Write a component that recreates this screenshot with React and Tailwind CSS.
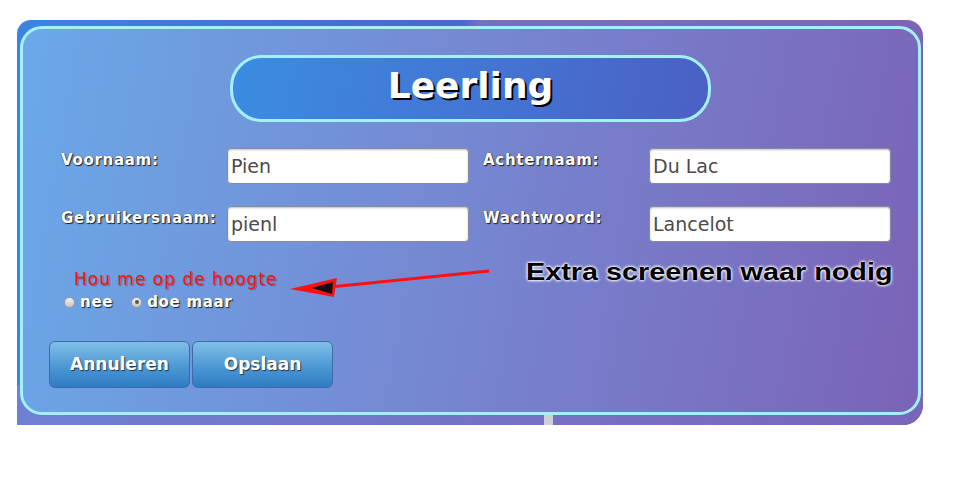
import React from "react";

const labelCls =
  "text-white font-bold text-[15px] leading-[18px] tracking-[0.7px] pt-[3px] [font-family:'DejaVu_Sans',sans-serif] [text-shadow:1px_1px_1px_#222,0_0_1px_#333]";
const inputCls =
  "h-[36px] w-[242px] bg-white rounded-[4px] border border-[#8a8a9a] shadow-[inset_0_1px_2px_rgba(0,0,0,0.25)] pl-[3px] flex items-center text-[19px] text-[#4b4b4b] [font-family:'DejaVu_Sans',sans-serif]";

function Field({ label, value }) {
  return (
    <div className="flex items-start">
      <div className={labelCls + " w-[166px]"}>{label}</div>
      <div className={inputCls}>{value}</div>
    </div>
  );
}

function Radio({ checked }) {
  return (
    <span className="inline-flex w-[11px] h-[11px] rounded-full border border-[#9a9a9a] bg-[linear-gradient(#f2f2f2,#c4c4c4)] items-center justify-center">
      {checked && <span className="w-[4px] h-[4px] rounded-full bg-[#555]" />}
    </span>
  );
}

function Btn({ children }) {
  return (
    <div className="w-[141px] h-[47px] rounded-[6px] border border-[#3f6aa6] bg-[linear-gradient(#80bfe7,#4c98d4_55%,#2e7bc2)] flex items-center justify-center text-white font-bold text-[17px] [font-family:'DejaVu_Sans',sans-serif] [text-shadow:1px_1px_1px_#234]">
      {children}
    </div>
  );
}

export default function App() {
  return (
    <div className="relative w-[960px] h-[500px] bg-white overflow-hidden pt-[20px] pl-[17px]">
      {/* background page behind dialog */}
      <div className="relative w-[906px] h-[405px] rounded-tl-[14px] rounded-tr-[16px] rounded-br-[20px] bg-[linear-gradient(90deg,#3c84e0_0%,#4868c9_49%,#7470c2_51%,#7c63b6_100%)]">
        <div className="absolute left-0 right-0 bottom-0 h-[40px] rounded-br-[20px] bg-[linear-gradient(90deg,#6e80d2,#7a66b9)]" />
        <div className="relative pt-[6px] pl-[3px]">
          {/* dialog */}
          <div className="w-[901px] h-[389px] rounded-[22px] border-[3px] border-[#a3f1f7] bg-[linear-gradient(100deg,#6aa9e8_0%,#7686d1_50%,#7b63b6_100%)] flex flex-col">
            <div className="mt-[26px] ml-[207px] w-[481px] h-[67px] rounded-[32px] border-[3px] border-[#a3f1f7] bg-[linear-gradient(100deg,#3b8ce3,#4b60c4)] flex items-center justify-center pb-[6px]">
              <span className="text-white font-bold text-[36px] leading-none [font-family:'DejaVu_Sans',sans-serif] [text-shadow:2px_2px_0_#000]">
                Leerling
              </span>
            </div>

            <div className="mt-[26px] pl-[38px] grid grid-cols-[408px_408px] gap-x-[14px] gap-y-[22px]">
              <Field label="Voornaam:" value="Pien" />
              <Field label="Achternaam:" value="Du Lac" />
              <Field label="Gebruikersnaam:" value="pienl" />
              <Field label="Wachtwoord:" value="Lancelot" />
            </div>

            <div className="mt-[27px] pl-[51px] text-[#ff1010] text-[17px] leading-[20px] tracking-[1px] [font-family:'DejaVu_Sans',sans-serif] [text-shadow:1px_1px_1px_rgba(80,0,0,0.4)]">
              Hou me op de hoogte
            </div>
            <div className="mt-[4px] pl-[41px] flex items-center gap-[2px] text-white font-bold text-[15px] leading-[18px] tracking-[0.7px] [font-family:'DejaVu_Sans',sans-serif] [text-shadow:1px_1px_1px_#222]">
              <Radio />
              <span className="ml-[3px]">nee</span>
              <span className="ml-[14px]" />
              <Radio checked />
              <span className="ml-[3px]">doe maar</span>
            </div>

            <div className="mt-[30px] pl-[26px] flex gap-[2px]">
              <Btn>Annuleren</Btn>
              <Btn>Opslaan</Btn>
            </div>
          </div>
        </div>
        <div className="absolute left-[527px] top-[395px] w-[9px] h-[10px] bg-[#cfcfd6]" />
      </div>

      {/* annotation */}
      <svg className="absolute left-0 top-0" width="960" height="500">
        <line x1="489" y1="271" x2="330" y2="287" stroke="#ff1010" strokeWidth="3" />
        <polygon points="290,289 337,278 334,297" fill="#ff1010" />
        <polygon points="312,288 333,282 332,294" fill="#111" />
      </svg>
      <div className="absolute left-[526px] top-[258px] origin-left scale-x-[1.2] text-black font-bold text-[24px] leading-[28px] [font-family:'Liberation_Sans',Arial,sans-serif] [text-shadow:0_0_3px_#fff,0_0_3px_#fff,0_0_2px_#fff]">
        Extra screenen waar nodig
      </div>
    </div>
  );
}
